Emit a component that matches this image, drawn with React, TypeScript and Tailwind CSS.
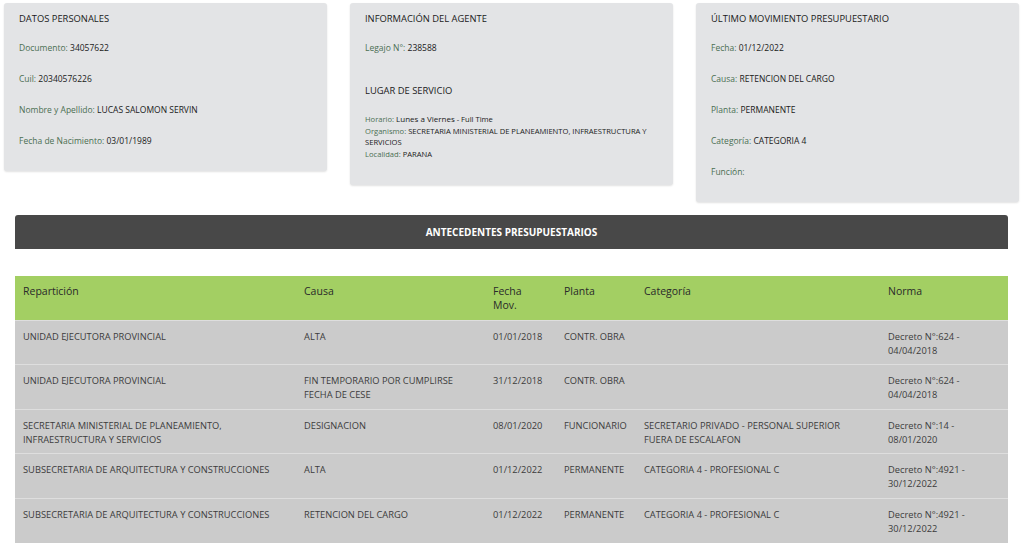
import React from 'react';

const rows = [
  {
    reparticion: 'UNIDAD EJECUTORA PROVINCIAL',
    causa: 'ALTA',
    fecha: '01/01/2018',
    planta: 'CONTR. OBRA',
    categoria: '',
    norma: ['Decreto N°:624 -', '04/04/2018'],
  },
  {
    reparticion: 'UNIDAD EJECUTORA PROVINCIAL',
    causa: 'FIN TEMPORARIO POR CUMPLIRSE FECHA DE CESE',
    fecha: '31/12/2018',
    planta: 'CONTR. OBRA',
    categoria: '',
    norma: ['Decreto N°:624 -', '04/04/2018'],
  },
  {
    reparticion: 'SECRETARIA MINISTERIAL DE PLANEAMIENTO, INFRAESTRUCTURA Y SERVICIOS',
    causa: 'DESIGNACION',
    fecha: '08/01/2020',
    planta: 'FUNCIONARIO',
    categoria: 'SECRETARIO PRIVADO - PERSONAL SUPERIOR FUERA DE ESCALAFON',
    norma: ['Decreto N°:14 -', '08/01/2020'],
  },
  {
    reparticion: 'SUBSECRETARIA DE ARQUITECTURA Y CONSTRUCCIONES',
    causa: 'ALTA',
    fecha: '01/12/2022',
    planta: 'PERMANENTE',
    categoria: 'CATEGORIA 4 - PROFESIONAL C',
    norma: ['Decreto N°:4921 -', '30/12/2022'],
  },
  {
    reparticion: 'SUBSECRETARIA DE ARQUITECTURA Y CONSTRUCCIONES',
    causa: 'RETENCION DEL CARGO',
    fecha: '01/12/2022',
    planta: 'PERMANENTE',
    categoria: 'CATEGORIA 4 - PROFESIONAL C',
    norma: ['Decreto N°:4921 -', '30/12/2022'],
  },
];

const Field = ({ label, value }: { label: string; value?: string }) => (
  <p className="h-[31px] text-[8.5px] leading-[14px]">
    <span className="text-[#4b6f53]">{label}:</span>{' '}
    <span className="font-medium text-[#1a1a1a]">{value}</span>
  </p>
);

const Card = ({ title, children, className = '' }: { title: string; children: React.ReactNode; className?: string }) => (
  <div className={`w-[323px] rounded-[3px] bg-[#e3e4e6] px-[15px] pt-[8px] shadow-[0_1px_2px_rgba(0,0,0,0.12)] ${className}`}>
    <h3 className="mb-[14px] text-[9.4px] leading-[16px] text-[#1a1a1a]">{title}</h3>
    {children}
  </div>
);

export default function App() {
  return (
    <div className="min-h-[547px] w-[1024px] bg-white font-['Open_Sans',sans-serif]">
      {/* Summary cards */}
      <div className="flex items-start gap-[23px] pl-[4px] pt-[3px]">
        <Card title="DATOS PERSONALES" className="h-[168px]">
          <Field label="Documento" value="34057622" />
          <Field label="Cuil" value="20340576226" />
          <Field label="Nombre y Apellido" value="LUCAS SALOMON SERVIN" />
          <Field label="Fecha de Nacimiento" value="03/01/1989" />
        </Card>

        <Card title="INFORMACIÓN DEL AGENTE" className="h-[182px]">
          <Field label="Legajo N°" value="238588" />
          <h3 className="mt-[11px] text-[9.4px] leading-[16px] text-[#1a1a1a]">LUGAR DE SERVICIO</h3>
          <div className="mt-[14px] text-[7.6px] leading-[11.7px]">
            <p>
              <span className="text-[#4b6f53]">Horario:</span>{' '}
              <span className="text-[8px] font-medium text-[#1a1a1a]">Lunes a Viernes</span>
              <span className="text-[#1a1a1a]"> - Full Time</span>
            </p>
            <p>
              <span className="text-[#4b6f53]">Organismo:</span>{' '}
              <span className="font-medium text-[#1a1a1a]">
                SECRETARIA MINISTERIAL DE PLANEAMIENTO, INFRAESTRUCTURA Y SERVICIOS
              </span>
            </p>
            <p>
              <span className="text-[#4b6f53]">Localidad:</span>{' '}
              <span className="font-medium text-[#1a1a1a]">PARANA</span>
            </p>
          </div>
        </Card>

        <Card title="ÚLTIMO MOVIMIENTO PRESUPUESTARIO" className="h-[199px]">
          <Field label="Fecha" value="01/12/2022" />
          <Field label="Causa" value="RETENCION DEL CARGO" />
          <Field label="Planta" value="PERMANENTE" />
          <Field label="Categoría" value="CATEGORIA 4" />
          <Field label="Función" />
        </Card>
      </div>

      {/* Antecedentes */}
      <div className="ml-[15px] mt-[13px] w-[993px]">
        <div className="flex h-[34px] items-center justify-center rounded-t-[3px] bg-[#484848] text-[10px] font-bold text-white">
          ANTECEDENTES PRESUPUESTARIOS
        </div>

        <table className="mt-[27px] w-full table-fixed border-collapse text-left">
          <colgroup>
            <col className="w-[289px]" />
            <col className="w-[189px]" />
            <col className="w-[71px]" />
            <col className="w-[80px]" />
            <col className="w-[244px]" />
            <col />
          </colgroup>
          <thead>
            <tr className="h-[44px] bg-[#a3cf63] align-top text-[10.5px] leading-[14px] text-[#2a2a2a]">
              <th className="pl-[8px] pt-[8px] font-normal">Repartición</th>
              <th className="pt-[8px] font-normal">Causa</th>
              <th className="pt-[8px] font-normal">
                Fecha
                <br />
                Mov.
              </th>
              <th className="pt-[8px] font-normal">Planta</th>
              <th className="pt-[8px] font-normal">Categoría</th>
              <th className="pt-[8px] font-normal">Norma</th>
            </tr>
          </thead>
          <tbody>
            {rows.map((r, i) => (
              <tr
                key={i}
                className="h-[44.5px] border-t border-[#dedede] bg-[#cbcbcb] align-top text-[9.3px] leading-[14px] text-[#3c3c3c]"
              >
                <td className="pl-[8px] pr-[30px] pt-[9px]">{r.reparticion}</td>
                <td className="pr-[20px] pt-[9px]">{r.causa}</td>
                <td className="pt-[9px]">{r.fecha}</td>
                <td className="pt-[9px]">{r.planta}</td>
                <td className="pr-[30px] pt-[9px]">{r.categoria}</td>
                <td className="pr-[30px] pt-[9px]">
                  {r.norma[0]}
                  <br />
                  {r.norma[1]}
                </td>
              </tr>
            ))}
          </tbody>
        </table>
      </div>
    </div>
  );
}
